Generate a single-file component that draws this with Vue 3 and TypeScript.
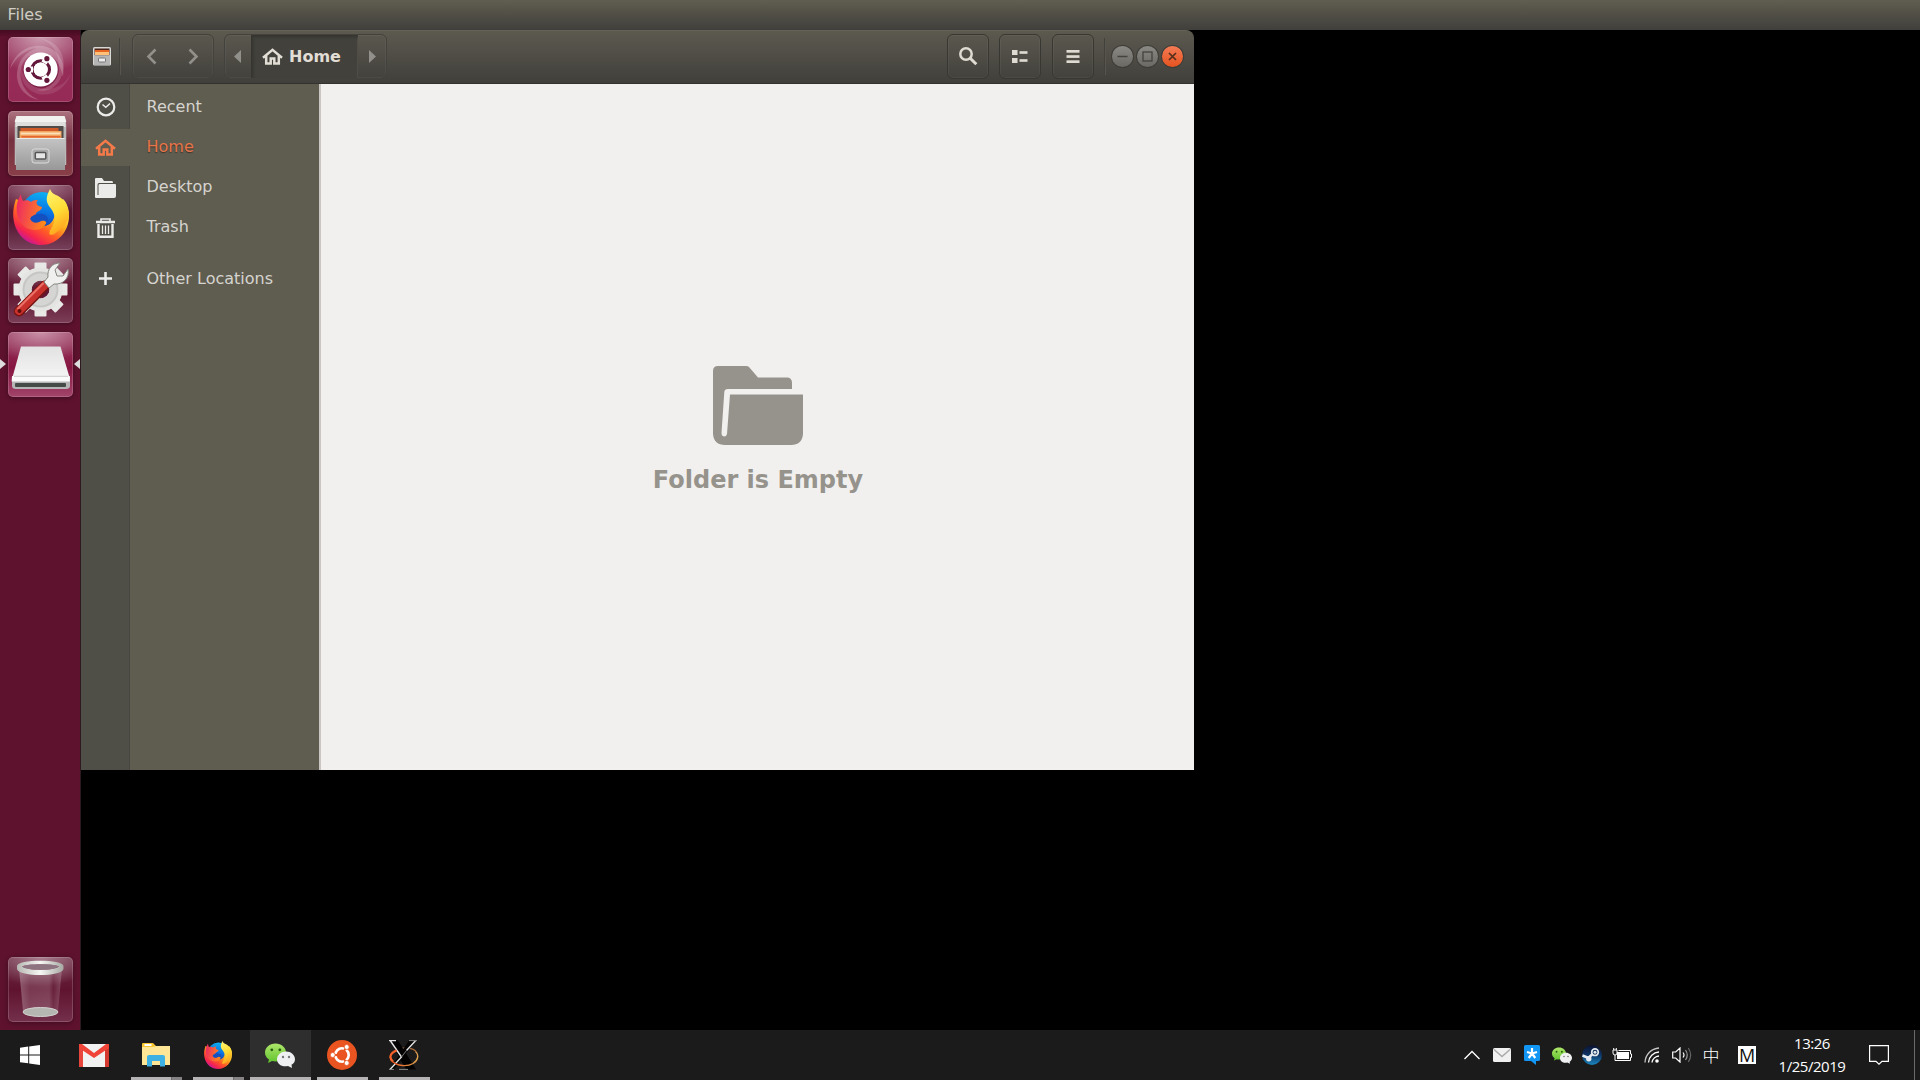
<script setup lang="ts">
interface Place {
  name: string
  icon: string
  active?: boolean
}

const places: Place[] = [
  { name: 'Recent', icon: 'recent' },
  { name: 'Home', icon: 'home', active: true },
  { name: 'Desktop', icon: 'desktop' },
  { name: 'Trash', icon: 'trash' },
  { name: 'Other Locations', icon: 'plus' },
]

const launchers: string[] = ['ubuntu', 'files', 'firefox', 'settings', 'drive']

const gearTeeth: number[] = [0, 45, 90, 135, 180, 225, 270, 315]
</script>

<template>
  <div class="screen">
    <svg class="defs" width="0" height="0">
      <defs>
        <linearGradient id="ffBody" x1="0.85" y1="0.1" x2="0.2" y2="0.9">
          <stop offset="0" stop-color="#fff24a" />
          <stop offset="0.35" stop-color="#ffb21e" />
          <stop offset="0.62" stop-color="#ff5b26" />
          <stop offset="0.85" stop-color="#f5244f" />
          <stop offset="1" stop-color="#c31a9a" />
        </linearGradient>
        <linearGradient id="ffGlobe" x1="0.6" y1="0" x2="0.4" y2="1">
          <stop offset="0" stop-color="#0cb2f4" />
          <stop offset="0.5" stop-color="#0a6fe0" />
          <stop offset="1" stop-color="#282b90" />
        </linearGradient>
        <linearGradient id="ffTail" x1="0.3" y1="0" x2="0.6" y2="1">
          <stop offset="0" stop-color="#fff36a" />
          <stop offset="0.5" stop-color="#ffdc35" />
          <stop offset="1" stop-color="#ff9c1b" />
        </linearGradient>
        <linearGradient id="ffHead" x1="0" y1="0.3" x2="1" y2="0.5">
          <stop offset="0" stop-color="#ee2a62" />
          <stop offset="1" stop-color="#ff8a1a" />
        </linearGradient>
        <linearGradient id="drawer" x1="0" y1="0" x2="0" y2="1">
          <stop offset="0" stop-color="#c4c4c4" />
          <stop offset="1" stop-color="#989898" />
        </linearGradient>
        <linearGradient id="driveTop" x1="0" y1="0" x2="0" y2="1">
          <stop offset="0" stop-color="#e2e2e2" />
          <stop offset="1" stop-color="#f5f5f5" />
        </linearGradient>
        <linearGradient id="rim" x1="0" y1="0" x2="1" y2="0">
          <stop offset="0" stop-color="#b6b6b2" />
          <stop offset="0.5" stop-color="#f6f6f4" />
          <stop offset="1" stop-color="#a6a6a2" />
        </linearGradient>
        <linearGradient id="glass" x1="0" y1="0" x2="1" y2="0">
          <stop offset="0" stop-color="#fff" stop-opacity="0.3" />
          <stop offset="0.25" stop-color="#fff" stop-opacity="0.16" />
          <stop offset="0.7" stop-color="#fff" stop-opacity="0.18" />
          <stop offset="0.8" stop-color="#fff" stop-opacity="0.06" />
          <stop offset="1" stop-color="#fff" stop-opacity="0.22" />
        </linearGradient>
        <linearGradient id="green" x1="0" y1="0" x2="0" y2="1">
          <stop offset="0" stop-color="#aee66a" />
          <stop offset="1" stop-color="#5fc32e" />
        </linearGradient>
        <linearGradient id="steam" x1="0" y1="0" x2="0" y2="1">
          <stop offset="0" stop-color="#0c1230" />
          <stop offset="0.5" stop-color="#0e3566" />
          <stop offset="1" stop-color="#1a87c0" />
        </linearGradient>
        <linearGradient id="orbit" x1="0" y1="0" x2="1" y2="0">
          <stop offset="0" stop-color="#f0531d" />
          <stop offset="1" stop-color="#dca24e" />
        </linearGradient>
        <symbol id="firefox" viewBox="0 0 56 56">
          <circle cx="29" cy="24" r="21" fill="url(#ffGlobe)" />
          <path fill="url(#ffBody)" d="M3 10 C1 16 -1 24 1 33 C4 47 15 56 28 56 C44 56 56 43 56 27 C56 20 54 14 50 10 L42 18 C43 25 41 33 35 36 C29 39 21 37 17 31 L12 14 Z" />
          <path fill="url(#ffTail)" d="M37 0 C34 6 32 11 36 17 C42 24 44 31 38 40 C34 46 38 48 44 43 C51 38 56 31 56 25 C55 15 49 8 43 6 C40 5 38 3 37 0 Z" />
          <path fill="url(#ffHead)" d="M8 5 C8 8 9 10 10 12 C13 11 16 11 18 13 C20 11 23 11 25 11 C22 14 24 17 29 18 C29 22 23 22 23 25 C25 28 19 28 17 29 C18 34 24 35 28 32 C32 31 35 33 32 36 C29 42 16 43 10 36 C4 30 2 20 5 11 Z" />
          <path fill="#1450bf" d="M18 28 C21 25 26 24 30 25 C35 26 36 31 34 33 C29 28 25 35 18 31 Z" />
        </symbol>
        <symbol id="cabinet" viewBox="0 0 52 54">
          <path d="M2 0 H50 L52 9 V49 H0 V9 Z" fill="#b9b9b9" />
          <path d="M2 0 H50 L52 6 H0 Z" fill="#f2f2f0" />
          <rect x="1" y="6" width="50" height="5" fill="#dededc" />
          <rect x="3" y="10" width="46" height="13" fill="#514b49" />
          <rect x="6" y="12" width="38" height="12" fill="#cf5b28" />
          <rect x="5" y="15" width="42" height="8" fill="#f1a35e" />
          <rect x="6" y="16.5" width="40" height="2" fill="#fde0b8" />
          <rect x="7" y="20" width="39" height="1.5" fill="#e66531" />
          <path d="M1.500 22 H50.500 V54 H1.500 Z" fill="url(#drawer)" />
          <path d="M2 22.500 H50" stroke="#e8e8e8" />
          <rect x="17.500" y="33" width="17" height="14" rx="2.500" fill="#aaa" stroke="#ddd" />
          <rect x="20.800" y="36.500" width="10.500" height="6.500" rx="1" fill="#e6e6e6" stroke="#555" stroke-width="1.500" />
        </symbol>
        <symbol id="house" viewBox="0 0 21 17">
          <path fill="none" stroke="currentColor" stroke-width="2.500" d="M1 9.800 L10.500 1.800 L20 9.800" />
          <path fill="none" stroke="currentColor" stroke-width="2.500" d="M4.200 8 V15.500 H8.700 V10.500 H12.300 V15.500 H16.800 V8" />
        </symbol>
        <symbol id="wechat" viewBox="0 0 30 25">
          <path d="M10.500 0.500 C4.500 0.500 0 4.500 0 9.500 C0 12.500 1.500 15 4 16.500 L3 20 L7 18 C14 20 21 15.500 21 9.500 C21 4.500 16.500 0.500 10.500 0.500 Z" fill="url(#green)" />
          <circle cx="6.800" cy="6.800" r="1.400" fill="#255c10" />
          <circle cx="14.800" cy="6.800" r="1.400" fill="#255c10" />
          <path d="M21 8.500 C16 8.500 12 12 12 16.200 C12 21 17 24.500 23 23 L27 25 L26.500 21.800 C28.800 20.500 30 18.500 30 16.200 C30 12 26 8.500 21 8.500 Z" fill="#eff0f1" />
          <circle cx="18" cy="14" r="1.200" fill="#777" />
          <circle cx="24" cy="14" r="1.200" fill="#777" />
        </symbol>
      </defs>
    </svg>

    <header class="panel">Files</header>

    <main class="desktop">
      <aside class="launcher">
        <div v-for="l in launchers" :key="l" class="tile" :class="l">
          <svg v-if="l === 'ubuntu'" viewBox="0 0 65 65">
            <path d="M2 32 C6 16 20 7 35 9 C50 12 58 24 55 40 C52 26 46 16 33 16 C18 16 11 27 13 42 C15 52 22 59 31 63 C16 60 8 48 9 36 C10 24 17 15 29 11 C18 12 8 20 2 32 Z" fill="#fff" opacity="0.2" />
            <path d="M34 2 C50 4 60 20 54 38 C50 50 40 56 28 53 C42 52 52 42 51 29 C50 16 45 7 34 2 Z" fill="#fff" opacity="0.16" />
            <path d="M63 36 C58 52 44 60 30 57 C18 53 11 43 13 30 C16 44 26 52 38 52 C50 52 58 46 63 36 Z" fill="#fff" opacity="0.1" />
            <circle cx="33" cy="33.500" r="17.500" fill="#5a1030" opacity="0.45" />
            <circle cx="32.700" cy="32.500" r="17" fill="#fff" />
            <circle cx="32.700" cy="32.500" r="8.700" fill="none" stroke="#63173a" stroke-width="3.300" />
            <path d="M20 32.500 H25 M38.700 21.500 L36 26 M38.700 43.500 L36 39" stroke="#fff" stroke-width="6" />
            <circle cx="32.700" cy="32.500" r="7" fill="#fff" />
            <g fill="#63173a"><circle cx="20.300" cy="32.500" r="2.600" /><circle cx="38.900" cy="21.700" r="2.600" /><circle cx="38.900" cy="43.300" r="2.600" /></g>
          </svg>
          <svg v-else-if="l === 'files'" viewBox="0 0 65 65"><use href="#cabinet" x="6.500" y="5" width="52" height="54" /></svg>
          <svg v-else-if="l === 'firefox'" viewBox="0 0 65 65"><use href="#firefox" x="5" y="4" width="56" height="56" /></svg>
          <svg v-else-if="l === 'settings'" viewBox="0 0 65 65">
            <g transform="translate(32.500 31.500)">
              <rect v-for="a in gearTeeth" :key="a" x="-6" y="-27" width="12" height="12" rx="1" fill="#e8e8e6" :transform="`rotate(${a})`" />
              <circle r="15.500" fill="none" stroke="#e4e4e2" stroke-width="13" />
              <circle r="14" fill="none" stroke="#c6c6c4" stroke-width="8" />
              <circle r="12.500" fill="none" stroke="#d5d5d3" stroke-width="7" />
            </g>
            <path d="M11 53.500 L37 27.500" stroke="#741310" stroke-width="10" stroke-linecap="round" />
            <path d="M11 53 L37 27" stroke="#c9322c" stroke-width="8" stroke-linecap="round" />
            <path d="M10 50.500 L35 25.500" stroke="#ea7068" stroke-width="2" stroke-linecap="round" />
            <circle cx="11.500" cy="53" r="2" fill="#5b0f0c" />
            <path d="M36 24 L40 19 C39 11 44 5 52 5 L47 12 L49 18 L55 18 L60 11 C62 20 55 27 46 26 L41 30 Z" fill="#f0f0ee" stroke="#858780" />
          </svg>
          <svg v-else viewBox="0 0 65 65">
            <path d="M4 44 H62 V54 Q62 57 58 57 H8 Q4 57 4 54 Z" fill="#b5b5b5" />
            <path d="M13 14.500 H52.500 L62 47 H4 Z" fill="url(#driveTop)" />
            <path d="M4 44 L3.700 49.500 H62 L61.500 44 L60 44.500 H6 Z" fill="#fbfbfb" />
            <path d="M6 44.300 H60" stroke="#ccc" />
            <rect x="7" y="51" width="51" height="4" rx="1" fill="#454b47" />
          </svg>
          <template v-if="l === 'drive'">
            <i class="pip left"></i>
            <i class="pip right"></i>
          </template>
        </div>
        <div class="tile bin">
          <svg viewBox="0 0 65 65">
            <path d="M11 11 L15 54 Q32 64 50 54 L54 11 Z" fill="url(#glass)" />
            <ellipse cx="32.500" cy="55" rx="17.500" ry="4.500" fill="#b5b6b2" stroke="#d3d4d0" />
            <path fill-rule="evenodd" d="M9 9 C9 2 55.500 2 55.500 9 V12 C53.500 20 11 20 9 12 Z M14 9.500 C19 14 46 14 51 9.500 C46 6.500 19 6.500 14 9.500 Z" fill="url(#rim)" />
            <path d="M14 9.500 C19 14 46 14 51 9.500 C46 6.500 19 6.500 14 9.500 Z" fill="#8d7480" />
          </svg>
        </div>
      </aside>

      <section class="window">
        <div class="titlebar">
          <svg class="app-icon" viewBox="0 0 18 19">
            <rect width="18" height="18.500" rx="1.500" fill="#d8d8d6" /><rect x="1.500" y="1.500" width="15" height="7" fill="#4b2517" /><rect x="2" y="3" width="14" height="2" fill="#e8651f" /><rect x="2" y="5" width="14" height="3" fill="#ffc17a" /><rect x="1" y="8.500" width="16" height="9.500" fill="#b5b5b5" /><rect x="5.500" y="11" width="7" height="4" rx="1" fill="#eee" stroke="#777" />
          </svg>
          <i class="sep first"></i>
          <div class="group nav">
            <svg viewBox="0 0 81 45"><path d="M23.500 15.500 L16.500 22.500 L23.500 29.500 M57.500 15.500 L64.500 22.500 L57.500 29.500" fill="none" stroke="#92908a" stroke-width="2.600" /></svg>
          </div>
          <div class="group path">
            <span class="tri prev"><svg viewBox="0 0 7 13"><path d="M7 0 V13 L0 6.500 Z" fill="#92908a" /></svg></span>
            <div class="crumb">
              <svg class="crumb-icon"><use href="#house" /></svg>
              <span>Home</span>
            </div>
            <span class="tri"><svg viewBox="0 0 7 13"><path d="M0 0 V13 L7 6.500 Z" fill="#92908a" /></svg></span>
          </div>
          <div class="tools">
            <div class="group tool">
              <svg viewBox="0 0 42 45"><circle cx="19" cy="20" r="5.700" fill="none" stroke="#dfdbd2" stroke-width="2.500" /><path d="M23 24 L29.300 30.300" stroke="#dfdbd2" stroke-width="3" /></svg>
            </div>
            <div class="group tool">
              <svg viewBox="0 0 42 45" fill="#dfdbd2"><rect x="13" y="16" width="5.500" height="5" /><rect x="13" y="24" width="5.500" height="5" /><rect x="20.500" y="17.200" width="8" height="2.600" /><rect x="20.500" y="25.200" width="8" height="2.600" /></svg>
            </div>
            <div class="group tool">
              <svg viewBox="0 0 42 45" fill="#dfdbd2"><rect x="14.500" y="16" width="13" height="2.700" /><rect x="14.500" y="21.200" width="13" height="2.700" /><rect x="14.500" y="26.300" width="13" height="2.700" /></svg>
            </div>
          </div>
          <i class="sep"></i>
          <div class="controls">
            <b><svg viewBox="0 0 21 21"><path d="M5.500 10.500 H15.500" stroke="#44433e" stroke-width="1.300" /></svg></b>
            <b><svg viewBox="0 0 21 21"><rect x="6" y="6" width="9" height="9" fill="none" stroke="#44433e" stroke-width="1.300" /></svg></b>
            <b class="close"><svg viewBox="0 0 21 21"><path d="M7 7 L14 14 M14 7 L7 14" stroke="#54301c" stroke-width="1.700" /></svg></b>
          </div>
        </div>

        <div class="content">
          <nav class="sidebar">
            <div v-for="p in places" :key="p.name" class="place" :class="[{ active: p.active }, p.icon]">
              <span class="place-icon">
                <svg v-if="p.icon === 'recent'" width="20" height="20" viewBox="0 0 20 20" fill="none" stroke="currentColor"><circle cx="10" cy="10" r="8.300" stroke-width="2.200" /><path d="M6.500 7.500 L9.800 10.300 L14 6.500" stroke-width="1.500" /></svg>
                <svg v-else-if="p.icon === 'home'" width="21" height="17"><use href="#house" /></svg>
                <svg v-else-if="p.icon === 'desktop'" width="21" height="20" viewBox="0 0 21 20" fill="currentColor"><path d="M0 1 Q0 0 1 0 H7 L9 3 H17 Q18 3 18 5 H4 Q2.500 5 2.500 7 V17 H3.500 V7 Q3.500 6 5 6 H20 Q21 6 21 7 V18 Q21 20 19 20 H1 Q0 20 0 19 Z" /></svg>
                <svg v-else-if="p.icon === 'trash'" width="19" height="20" viewBox="0 0 19 20" fill="none" stroke="currentColor"><path d="M0 4 H19" stroke-width="2.400" /><path d="M5 3 V1 H14 V3" stroke-width="1.600" /><path d="M2.500 6 V18.700 H16.500 V6" stroke-width="2.400" /><path d="M6.500 7.500 V16 M9.500 7.500 V16 M12.500 7.500 V16" stroke-width="1.300" /></svg>
                <svg v-else width="13" height="13" viewBox="0 0 13 13"><path d="M0 6.500 H13 M6.500 0 V13" stroke="currentColor" stroke-width="2.600" /></svg>
              </span>
              <span class="place-name">{{ p.name }}</span>
            </div>
          </nav>
          <div class="empty">
            <svg width="90" height="79" viewBox="0 0 90 79" fill="#96938c">
              <path d="M5 0 H33 Q35 0 36 1 L45 11.500 H74 Q79 11.500 79 17 V23 H15 Q11.500 23 11.300 26 L8.500 67 Q8.500 70 11 70.500 Q13.500 70.500 14 68 L17 28.500 H90 V68 Q89 79 78 79 H12 Q1 79 0 68 V5 Q0 0 5 0 Z" />
            </svg>
            <p>Folder is Empty</p>
          </div>
        </div>
      </section>
    </main>

    <footer class="taskbar">
      <div class="start"><svg width="20" height="20" viewBox="0 0 20 20" fill="#fff"><path d="M0 2.800 L8.200 1.600 V9.400 H0 Z M9.200 1.400 L20 0 V9.400 H9.200 Z M0 10.400 H8.200 V18.300 L0 17.200 Z M9.200 10.400 H20 V20 L9.200 18.500 Z" /></svg></div>
      <div class="task">
        <svg width="30" height="23" viewBox="0 0 30 23"><rect width="30" height="23" rx="1" fill="#f2f2f2" /><path d="M0 1 H4 V23 H0 Z" fill="#e8453c" /><path d="M26 1 H30 V23 H26 Z" fill="#d5382f" /><path d="M0 0 H3 L15 9 L27 0 H30 V4 L15 14 L0 4 Z" fill="#f04438" /></svg>
      </div>
      <div class="task run stacked">
        <svg width="28" height="24" viewBox="0 0 28 24"><path d="M0 1 Q0 0 1 0 H11 L14 3 H27 V8 H0 Z" fill="#f7c630" /><rect x="2.500" y="1" width="7" height="2" fill="#fff" /><path d="M0 4 H11 L14 3 H28 V22 H0 Z" fill="#ffe596" /><path d="M5 23.500 V14 Q5 12 7 12 H21 Q23 12 23 14 V23.500 H18 V18 H10 V23.500 Z" fill="#3db1e4" /></svg>
      </div>
      <div class="task run stacked"><svg width="28" height="28"><use href="#firefox" /></svg></div>
      <div class="task run current"><svg width="30" height="25"><use href="#wechat" /></svg></div>
      <div class="task run">
        <svg width="30" height="30" viewBox="0 0 30 30"><circle cx="15" cy="15" r="15" fill="#e95420" /><circle cx="15" cy="15" r="6.700" fill="none" stroke="#fff" stroke-width="2.600" /><path d="M5 15 H11 M20 6 L17 11 M20 24 L17 19" stroke="#e95420" stroke-width="2" /><g fill="#fff" stroke="#e95420" stroke-width="0.800"><circle cx="5.700" cy="15" r="2.500" /><circle cx="19.700" cy="7" r="2.500" /><circle cx="19.700" cy="23" r="2.500" /></g></svg>
      </div>
      <div class="task run">
        <svg width="30" height="30" viewBox="0 0 30 30"><path d="M9 9.500 C15 7 24 7.500 27 11.500" fill="none" stroke="#b8743c" stroke-width="1.200" /><path d="M20 0.500 H27 L5 29.500 H0.500 Z" fill="#050505" /><path d="M1 0.500 H9 L27 29.500 H17 Z" fill="#020202" /><path d="M0 0.600 H7 M1.500 1 L12.500 17 L1 29.500 M17.500 10.500 L26.500 0.700" fill="none" stroke="#e4e4e4" stroke-width="1.400" /><path d="M20 0.600 H28 M10 29.400 H19 M0 29.400 H5" stroke="#8a8a8a" /><path d="M12.500 17 L17.500 10.500" stroke="#777" /><path d="M7.500 10.500 C1 13 -0.500 18 3.500 21.500 C8 26 18 27 24 23.500 C29.500 20 30 14.500 26.500 11.500" fill="none" stroke="url(#orbit)" stroke-width="1.400" /><path d="M7.500 10.500 C0.500 13.500 0 18 4 21.500" fill="none" stroke="#f2612a" stroke-width="2.200" /></svg>
      </div>

      <div class="tray">
        <span><svg width="16" height="10" viewBox="0 0 16 10"><path d="M0.500 9 L8 1.500 L15.500 9" fill="none" stroke="#fff" stroke-width="1.300" /></svg></span>
        <span><svg width="18" height="14" viewBox="0 0 18 14"><rect width="18" height="14" rx="1.500" fill="#f0f0f0" /><path d="M1 1.500 L9 8.500 L17 1.500" fill="none" stroke="#aaa" stroke-width="1.500" /></svg></span>
        <span><svg width="16" height="20" viewBox="0 0 16 20"><path d="M1.500 0 H14.500 Q16 0 16 1.500 V14.500 Q16 16 14.500 16 H12 V20 L7 16 H1.500 Q0 16 0 14.500 V1.500 Q0 0 1.500 0 Z" fill="#1296f3" /><path d="M8 3 V8.500 M8 8.500 L3 7 M8 8.500 L13 7 M8 8.500 L4.700 13 M8 8.500 L11.300 13" stroke="#fff" stroke-width="2.200" /></svg></span>
        <span><svg width="20" height="17"><use href="#wechat" /></svg></span>
        <span><svg width="20" height="20" viewBox="0 0 20 20"><circle cx="10" cy="10" r="10" fill="url(#steam)" /><path d="M0.500 10.500 L6.500 13 L11 8.500" fill="none" stroke="#e4ebf0" stroke-width="2.500" /><circle cx="6.800" cy="13.700" r="2.700" fill="#e4ebf0" /><circle cx="13" cy="7.200" r="3.300" fill="#12315c" stroke="#e4ebf0" stroke-width="1.700" /><circle cx="13" cy="7.200" r="1.500" fill="#e4ebf0" /></svg></span>
        <span><svg width="20" height="14" viewBox="0 0 20 14"><path d="M1 2 H5 V5 Q5 7 3 7 Q1 7 1 5 Z M1.700 0 V2 M4.300 0 V2 M3 7 V12.500 H18.500 V9.500 H19.500 V6 H18.500 V2.500 H6.500" fill="none" stroke="#fff" /><rect x="5" y="4" width="12" height="7" fill="#fff" /></svg></span>
        <span><svg width="16" height="16" viewBox="0 0 16 16"><g fill="none" stroke="#fff" stroke-width="1.300"><path d="M1 15.500 A15 15 0 0 1 15 1" opacity="0.75" /><path d="M4.500 15.500 A11 11 0 0 1 15 5" /><path d="M8 15.500 A7.500 7.500 0 0 1 15 9" /></g><circle cx="13" cy="14" r="1.800" fill="#fff" /></svg></span>
        <span><svg width="20" height="16" viewBox="0 0 20 16" fill="none"><path d="M0.700 5 H3.700 L8 1 V15 L3.700 11 H0.700 Z M11 5.500 Q13 8 11 10.500" stroke="#fff" stroke-width="1.200" /><path d="M13.500 3 Q17 8 13.500 13" stroke="#999" stroke-width="1.200" /><path d="M16.300 1 Q21 8 16.300 15" stroke="#666" stroke-width="1.200" /></svg></span>
        <span class="ime">中</span>
        <span class="mode"><em>M</em></span>
        <div class="clock"><div>13:26</div><div>1/25/2019</div></div>
        <span class="notify"><svg width="20" height="20" viewBox="0 0 20 20"><path d="M0.600 0.600 H19.400 V16.400 H13 L10 19.200 L7 16.400 H0.600 Z" fill="none" stroke="#fff" stroke-width="1.200" /></svg></span>
        <i class="peek"></i>
      </div>
    </footer>
  </div>
</template>

<style>
body {
  margin: 0;
  background: #000;
  overflow: hidden;
}
</style>

<style scoped>
* {
  box-sizing: border-box;
}
.screen {
  width: 1920px;
  height: 1080px;
  display: flex;
  flex-direction: column;
  background: #000;
  font-family: "DejaVu Sans", sans-serif;
  font-size: 16px;
}
.defs {
  position: absolute;
}
svg {
  display: block;
  flex: none;
}
.panel {
  height: 30px;
  flex: none;
  padding-left: 7.4px;
  line-height: 29px;
  font-size: 16px;
  color: #d0cdc4;
  background: linear-gradient(#605e50, #403f3b);
}
.desktop {
  height: 1000px;
  flex: none;
  display: flex;
  align-items: flex-start;
}
.launcher {
  width: 81px;
  height: 1000px;
  flex: none;
  display: flex;
  flex-direction: column;
  gap: 8.7px;
  padding: 7.4px 0 7.8px 7.5px;
  background: linear-gradient(#430a1f, #5e122d 7px);
  border-right: 1px solid #2c1a20;
}
.tile {
  position: relative;
  width: 65px;
  height: 65px;
  flex: none;
  border-radius: 5px;
  border: 1px solid rgba(255, 255, 255, 0.17);
  background-origin: border-box;
  box-shadow: 0 1px 5px rgba(0, 0, 0, 0.35);
}
.tile svg {
  width: 65px;
  height: 65px;
  margin: -1px;
}
.tile.ubuntu {
  background-image: radial-gradient(ellipse 85% 55% at 50% 0, #cd9db0, transparent), linear-gradient(#96305a, #962a56);
}
.tile.files {
  background-image: linear-gradient(#ad7380, #763040 45%, #893f48);
}
.tile.firefox {
  background-image: radial-gradient(ellipse 85% 45% at 50% 0, #a8798c, transparent), linear-gradient(#65233f, #541530 55%, #77405a);
}
.tile.settings {
  background-image: radial-gradient(ellipse 85% 45% at 50% 0, #b58d9c, transparent), linear-gradient(#6e2b45, #611631 55%, #7b3e57);
}
.tile.drive {
  background-image: radial-gradient(ellipse 85% 45% at 50% 0, #c990a6, transparent), linear-gradient(#96395e, #861641 55%, #a2456b);
}
.tile.bin {
  margin-top: auto;
  background-image: radial-gradient(ellipse 85% 45% at 50% 0, #a77f8e, transparent), linear-gradient(#6c2b43, #5f132e 50%, #74304b);
}
.pip {
  position: absolute;
  top: 26px;
  border: 5px solid transparent;
}
.pip.left {
  left: -8.5px;
  border-left: 6px solid #dedede;
  border-right: 0;
}
.pip.right {
  left: 65.5px;
  border-right: 6px solid #dedede;
  border-left: 0;
}
.window {
  width: 1113px;
  height: 740px;
  display: flex;
  flex-direction: column;
  border-radius: 8px 8px 0 0;
  overflow: hidden;
}
.titlebar {
  height: 54px;
  flex: none;
  display: flex;
  align-items: center;
  padding: 0 11.5px 1px 12px;
  background: linear-gradient(#5c594f, #403f3b);
  border-top: 1px solid #646257;
  border-bottom: 1px solid #33322e;
}
.app-icon {
  width: 18px;
  height: 19px;
}
.sep {
  width: 2px;
  height: 37px;
  flex: none;
  border-left: 1px solid #42413b;
  border-right: 1px solid #57554d;
}
.sep.first {
  margin: 0 11px 0 7.500px;
}
.group {
  height: 45px;
  flex: none;
  border: 1px solid #43423c;
  border-radius: 6px;
  box-shadow: inset 0 0 0 1px rgba(255, 255, 255, 0.045);
}
.nav {
  width: 82px;
  margin-right: 10.500px;
}
.nav svg {
  width: 81px;
  height: 45px;
  margin: -1px;
}
.path {
  width: 163px;
  display: flex;
  align-items: stretch;
}
.tri {
  flex: 1;
  display: flex;
  align-items: center;
  justify-content: center;
}
.tri.prev {
  flex: none;
  width: 26px;
  padding-right: 2px;
}
.tri svg {
  width: 7px;
  height: 13px;
}
.crumb {
  width: 107px;
  display: flex;
  align-items: center;
  padding-left: 10.500px;
  gap: 6.500px;
  color: #e2ded5;
  font-weight: bold;
  background: #42413c;
  box-shadow: inset 2px 2px 3px #35342f, inset -1px 0 0 #504e47;
}
.crumb-icon {
  width: 21px;
  height: 17px;
}
.tools {
  display: flex;
  gap: 10.500px;
  margin: 0 10px 0 auto;
}
.tool {
  width: 42px;
  border-color: #383731;
}
.tool svg {
  width: 42px;
  height: 45px;
  margin: -1px;
}
.controls {
  display: flex;
  gap: 4px;
  margin-left: 6px;
}
.controls b {
  width: 21px;
  height: 21px;
  border-radius: 50%;
  background: linear-gradient(#8b8983, #6b6963);
  box-shadow: 0 0 0 1px #3d3c37;
}
.controls .close {
  background: linear-gradient(#f47b55, #e6531f);
}
.content {
  flex: 1;
  display: flex;
  min-height: 0;
}
.sidebar {
  width: 240px;
  flex: none;
  padding-top: 5px;
  border-right: 2px solid #c9c6c3;
  background: linear-gradient(90deg, #504f47 48px, #46453f 48px, #46453f 49px, #5f5d50 49px);
}
.place {
  height: 37px;
  margin-bottom: 3px;
  display: flex;
  align-items: center;
  color: #d6d4cf;
}
.place-icon {
  width: 49px;
  height: 37px;
  display: flex;
  align-items: center;
  justify-content: center;
  color: #ebebe9;
}
.place.recent .place-icon {
  padding-bottom: 1px;
}
.place-name {
  margin-left: 16.500px;
  padding-bottom: 2px;
}
.place.active .place-icon {
  background: #5f5d50;
  color: #f47a4a;
}
.place.active {
  color: #e8744a;
  text-shadow: 0 1px 1px #3c3428;
}
.place.plus {
  margin-top: 14px;
}
.place.plus .place-name {
  padding-bottom: 1px;
}
.empty {
  flex: 1;
  display: flex;
  flex-direction: column;
  align-items: center;
  padding: 281.500px 0 0 1px;
  background: #f1f0ee;
}
.empty p {
  margin: 21.500px 0 0;
  color: #96938c;
  font-size: 24px;
  line-height: 28px;
  font-weight: bold;
}
.taskbar {
  height: 50px;
  flex: none;
  display: flex;
  background: #1b1b1b;
}
.start {
  width: 60px;
  margin-right: 4px;
  display: flex;
  align-items: center;
  justify-content: center;
}
.task {
  position: relative;
  width: 61px;
  margin-right: 1px;
  padding-right: 2px;
  display: flex;
  align-items: center;
  justify-content: center;
}
.task.run::after {
  content: "";
  position: absolute;
  left: 5px;
  bottom: 0;
  width: 51px;
  height: 3px;
  background: #b5b3b3;
}
.task.stacked::after {
  background: linear-gradient(90deg, #b5b3b3 40px, #555 40px, #858383 41px);
}
.task.current {
  background: #2e2e2e;
}
.task.current::after {
  left: 0;
  width: 61px;
}
.tray {
  width: 463px;
  margin-left: auto;
  display: flex;
  color: #fff;
}
.tray span {
  width: 30px;
  flex: none;
  display: flex;
  align-items: center;
  justify-content: center;
}
.tray .ime {
  width: 28px;
  padding-bottom: 2px;
  font-family: "Noto Sans CJK SC", sans-serif;
  font-size: 17px;
  font-weight: 300;
}
.tray .mode {
  width: 44px;
}
.mode em {
  width: 18px;
  height: 18px;
  background: #fff;
  color: #111;
  font: normal 18px/18px "Open Sans", sans-serif;
  display: flex;
  justify-content: center;
}
.clock {
  width: 86px;
  padding-top: 2px;
  text-align: center;
  font-family: "Open Sans", sans-serif;
  font-size: 15px;
  line-height: 23px;
  letter-spacing: -0.45px;
}
.tray .notify {
  width: 48px;
}
.peek {
  width: 12px;
  border-right: 1px solid #6a6a6a;
}
</style>
